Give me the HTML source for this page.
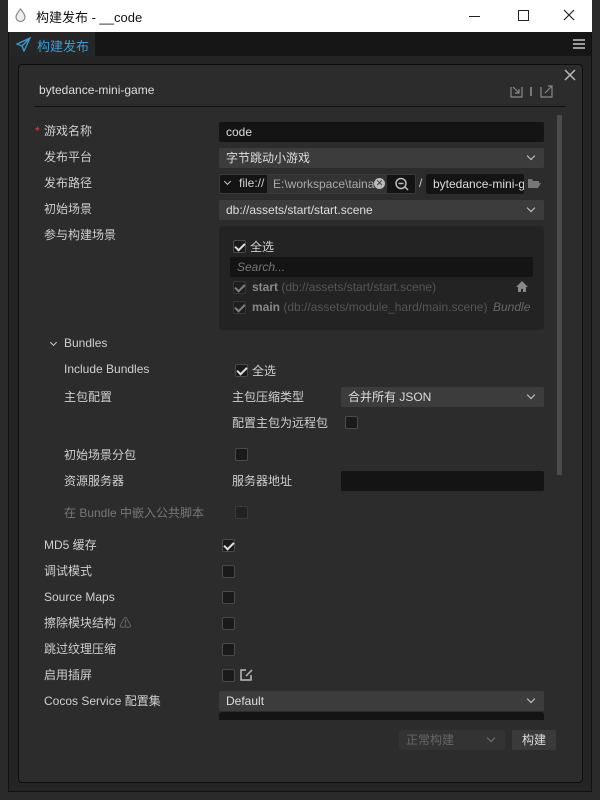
<!DOCTYPE html><html><head><meta charset="utf-8"><style>
*{box-sizing:border-box;margin:0;padding:0}
body{width:600px;height:800px;background:#2a2a2a;position:relative;overflow:hidden;font-family:"Liberation Sans","Noto Sans CJK SC",sans-serif;font-size:12px;color:#cfcfcf}
.a{position:absolute}
.lbl{position:absolute;left:44px;line-height:16px}
.inp{position:absolute;height:20px;background:#3c3c3c;border-radius:2px;line-height:20px;padding-left:7px;color:#ddd}
.dk{background:#141414}
.cb{position:absolute;width:13px;height:13px;background:#1a1a1a;border:1px solid #4a4a4a;border-radius:2px}
.cb.on::after{content:"";position:absolute;left:3px;top:0px;width:4px;height:8px;border:solid #ddd;border-width:0 2px 2px 0;transform:rotate(45deg)}
.chev{position:absolute;width:6px;height:6px;border:solid #ccc;border-width:0 1.5px 1.5px 0;transform:rotate(45deg)}
</style></head><body>
<div class="a" style="left:8px;top:0;width:584px;height:32px;background:#fff"></div>
<svg class="a" style="left:14px;top:8px" width="13" height="15" viewBox="0 0 13 15"><path d="M6.5 1C4 4 2 6.5 2 9a4.5 4.5 0 0 0 9 0C11 6.5 9 4 6.5 1z" fill="#eee" stroke="#888" stroke-width="1.2"/></svg>
<div class="a" style="left:36px;top:7px;color:#111;font-size:13px">构建发布 - __code</div>
<div class="a" style="left:469px;top:16px;width:11px;height:1px;background:#222"></div>
<div class="a" style="left:518px;top:10px;width:11px;height:11px;border:1px solid #222"></div>
<svg class="a" style="left:563px;top:9px" width="12" height="12"><path d="M1 1L11 11M11 1L1 11" stroke="#222" stroke-width="1.2"/></svg>
<div class="a" style="left:8px;top:32px;width:584px;height:760px;background:#242424;border:1px solid #111"></div>
<div class="a" style="left:9px;top:32px;width:582px;height:24px;background:#161616"></div>
<div class="a" style="left:9px;top:32px;width:86px;height:24px;background:#262626"></div>
<svg class="a" style="left:16px;top:37px" width="15" height="15" viewBox="0 0 15 15"><path d="M14 1L1 7l5 2 2 5z M6 9L14 1" fill="none" stroke="#3a9bd5" stroke-width="1.3"/></svg>
<div class="a" style="left:37px;top:36px;color:#3a9bd5;font-size:13px">构建发布</div>
<div class="a" style="left:573px;top:39px;width:12px;height:2px;background:#999;box-shadow:0 4px #999,0 8px #999"></div>
<div class="a" style="left:18px;top:64px;width:565px;height:719px;background:#2c2c2c;border:1px solid #0e0e0e;border-radius:4px"></div>
<svg class="a" style="left:564px;top:69px" width="12" height="12"><path d="M1 1L11 11M11 1L1 11" stroke="#bbb" stroke-width="1.5"/></svg>
<div class="a" style="left:39px;top:83px;color:#ddd">bytedance-mini-game</div>
<svg class="a" style="left:510px;top:84px" width="44" height="14" viewBox="0 0 44 14"><path d="M1 3v10h11V3 M3 3l6 6M5 9h4V5" fill="none" stroke="#888" stroke-width="1.2"/><path d="M21 3v9" stroke="#aaa" stroke-width="1.2"/><path d="M31 3v10h11V6 M35 9l7-7M38 2h4v4" fill="none" stroke="#888" stroke-width="1.2"/></svg>
<div class="a" style="left:34px;top:106px;width:532px;height:1px;background:#111"></div>
<div class="a" style="left:557px;top:115px;width:5px;height:360px;background:#4c4c4c"></div>

<div class="a" style="left:35px;top:124px;color:#e04040">*</div>
<div class="lbl" style="top:123px">游戏名称</div><div class="inp dk" style="left:219px;top:122px;width:325px">code</div>
<div class="lbl" style="top:149px">发布平台</div><div class="inp" style="left:219px;top:148px;width:325px">字节跳动小游戏</div><div class="chev" style="left:528px;top:153px"></div>
<div class="lbl" style="top:175px">发布路径</div>
<div class="inp dk" style="left:219px;top:174px;width:197px;border:1px solid #3a3a3a;padding-left:0"></div>
<div class="chev" style="left:225px;top:179px;width:5px;height:5px"></div>
<div class="a" style="left:239px;top:176px">file://</div>
<div class="a" style="left:267px;top:175px;width:120px;height:18px;background:#333;padding-left:6px;line-height:18px;color:#aaa;overflow:hidden;white-space:nowrap">E:\workspace\taina</div>
<div class="a" style="left:374px;top:178px;width:11px;height:11px;border-radius:50%;background:#bbb;color:#333;font-size:9px;line-height:11px;text-align:center">✕</div>
<svg class="a" style="left:394px;top:177px" width="15" height="14"><circle cx="7" cy="6.5" r="5" fill="none" stroke="#bbb" stroke-width="1.5"/><path d="M4.5 6.5h5M11 10l3 3" stroke="#bbb" stroke-width="1.5"/></svg>
<div class="a" style="left:419px;top:176px">/</div>
<div class="inp dk" style="left:426px;top:174px;width:98px;overflow:hidden;white-space:nowrap">bytedance-mini-g</div>
<svg class="a" style="left:527px;top:178px" width="14" height="11"><path d="M1 1h4l1 2h6v2H4L1 10z M1 10l3-5h10l-3 5z" fill="#777"/></svg>
<div class="lbl" style="top:201px">初始场景</div><div class="inp" style="left:219px;top:200px;width:325px">db://assets/start/start.scene</div><div class="chev" style="left:528px;top:205px"></div>
<div class="lbl" style="top:227px">参与构建场景</div>
<div class="a" style="left:219px;top:226px;width:325px;height:104px;background:#232323;border-radius:3px"></div>
<div class="cb on" style="left:233px;top:240px"></div><div class="a" style="left:250px;top:238px">全选</div>
<div class="a" style="left:230px;top:257px;width:303px;height:20px;background:#141414;color:#777;font-style:italic;padding-left:7px;line-height:20px">Search...</div>
<div class="cb on" style="left:233px;top:281px;opacity:.5"></div><div class="a" style="left:252px;top:280px;color:#888"><b>start</b> <span style="color:#555">(db://assets/start/start.scene)</span></div>
<svg class="a" style="left:516px;top:281px" width="12" height="11"><path d="M6 0L0 6h2v5h3V8h2v3h3V6h2z" fill="#888"/></svg>
<div class="cb on" style="left:233px;top:301px;opacity:.5"></div><div class="a" style="left:252px;top:300px;color:#888"><b>main</b> <span style="color:#555">(db://assets/module_hard/main.scene)</span></div>
<div class="a" style="left:493px;top:300px;color:#666;font-style:italic">Bundle</div>

<div class="chev" style="left:51px;top:340px;width:5px;height:5px"></div>
<div class="a" style="left:64px;top:336px">Bundles</div>
<div class="a" style="left:64px;top:362px">Include Bundles</div><div class="cb on" style="left:235px;top:364px"></div><div class="a" style="left:252px;top:362px">全选</div>
<div class="a" style="left:64px;top:388px">主包配置</div><div class="a" style="left:232px;top:388px">主包压缩类型</div>
<div class="inp" style="left:341px;top:387px;width:203px">合并所有 JSON</div><div class="chev" style="left:528px;top:392px"></div>
<div class="a" style="left:232px;top:414px">配置主包为远程包</div><div class="cb" style="left:345px;top:416px"></div>
<div class="a" style="left:64px;top:446px">初始场景分包</div><div class="cb" style="left:235px;top:448px"></div>
<div class="a" style="left:64px;top:472px">资源服务器</div><div class="a" style="left:232px;top:472px">服务器地址</div>
<div class="inp dk" style="left:341px;top:471px;width:203px"></div>
<div class="a" style="left:64px;top:504px;color:#777">在 Bundle 中嵌入公共脚本</div><div class="cb" style="left:235px;top:506px;opacity:.5"></div>

<div class="lbl" style="top:537px">MD5 缓存</div><div class="cb on" style="left:222px;top:539px"></div>
<div class="lbl" style="top:563px">调试模式</div><div class="cb" style="left:222px;top:565px"></div>
<div class="lbl" style="top:589px">Source Maps</div><div class="cb" style="left:222px;top:591px"></div>
<div class="lbl" style="top:615px">擦除模块结构 <span style="color:#777">⚠</span></div><div class="cb" style="left:222px;top:617px"></div>
<div class="lbl" style="top:641px">跳过纹理压缩</div><div class="cb" style="left:222px;top:643px"></div>
<div class="lbl" style="top:667px">启用插屏</div><div class="cb" style="left:222px;top:669px"></div>
<svg class="a" style="left:240px;top:668px" width="14" height="13"><path d="M6 2H1v10h10V7 M6 8l6-6" fill="none" stroke="#bbb" stroke-width="1.5"/></svg>
<div class="lbl" style="top:693px">Cocos Service 配置集</div>
<div class="inp" style="left:219px;top:691px;width:325px">Default</div><div class="chev" style="left:528px;top:696px"></div>
<div class="a" style="left:219px;top:712px;width:325px;height:8px;background:#141414;border-radius:3px 3px 0 0"></div>
<div class="a" style="left:399px;top:730px;width:106px;height:20px;background:#333;border-radius:2px;color:#666;padding-left:7px;line-height:20px">正常构建</div>
<div class="chev" style="left:488px;top:735px;border-color:#777"></div>
<div class="a" style="left:512px;top:730px;width:44px;height:20px;background:#3a3a3a;border-radius:2px;text-align:center;line-height:20px;color:#ddd">构建</div>
</body></html>
